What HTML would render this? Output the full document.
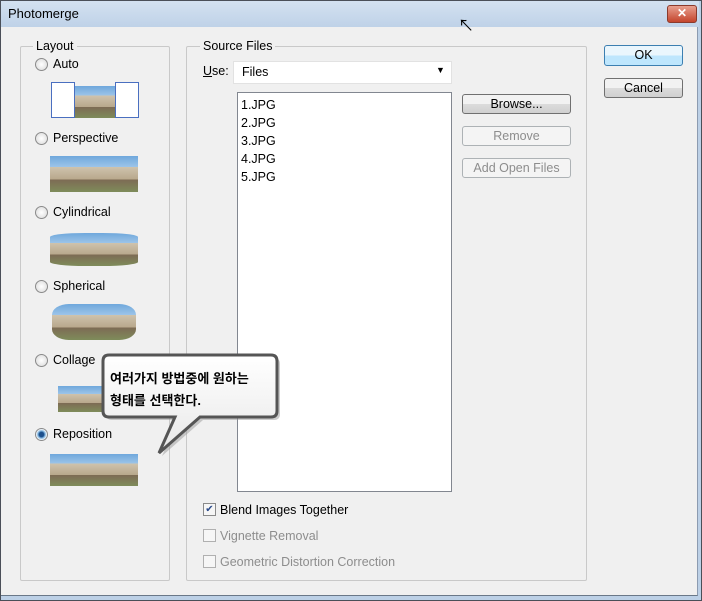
<!DOCTYPE html><html><head><meta charset="utf-8"><style>
body{margin:0;width:702px;height:601px;background:#fff;font-family:"Liberation Sans","Noto Sans CJK KR",sans-serif;font-size:12.5px;color:#000;position:relative;overflow:hidden}
.a{position:absolute}
.win{left:0;top:0;width:700px;height:599px;border:1px solid #4a4f58;background:#bcd0e6}
.title{left:1px;top:1px;width:698px;height:26px;background:linear-gradient(#d3e1f0,#bfd2e8)}
.body{left:1px;top:27px;width:696px;height:568px;background:#f0f0f0;border-right:1px solid #8c9bb0;border-bottom:1px solid #6a7888}
.grp{border:1px solid #c9c9c9;border-radius:2px}
.lg{background:#f0f0f0;padding:0 3px}
.rad{width:11px;height:11px;border:1px solid #8a8a8a;border-radius:50%;background:radial-gradient(#fff,#d8d8d8)}
.btn{border:1px solid #707070;border-radius:3px;background:linear-gradient(#f2f2f2 50%,#dcdcdc 50%,#d0d0d0);text-align:center;line-height:18px}
.dis{border-color:#adb2b5;color:#8d8d8d;background:#f4f4f4}
.chk{width:11px;height:11px;border:1px solid #b0b0b0;background:#f6f6f6}
.img{background:linear-gradient(#6fa8dc 0,#9cc4e8 30%,#cfc3ad 30%,#b8a88c 65%,#7d6a54 65%,#7e8c5a 100%)}
</style></head><body>
<div class="a win"></div><div class="a title"></div>
<div class="a" style="left:8px;top:6px;font-size:13px">Photomerge</div>
<div class="a" style="left:667px;top:5px;width:28px;height:16px;border:1px solid #8b3a2c;border-radius:3px;background:linear-gradient(#e8a08f,#c4452d);color:#fff;font-weight:bold;text-align:center;line-height:15px;font-size:12px">✕</div>
<div class="a body"></div>
<div class="a grp" style="left:20px;top:46px;width:148px;height:533px"></div>
<div class="a lg" style="left:33px;top:39px">Layout</div>
<div class="a grp" style="left:186px;top:46px;width:399px;height:533px"></div>
<div class="a lg" style="left:200px;top:39px">Source Files</div>

<div class="a rad" style="left:35px;top:58px"></div><div class="a" style="left:53px;top:57px">Auto</div>
<div class="a img" style="left:72px;top:86px;width:44px;height:32px"></div>
<div class="a" style="left:51px;top:82px;width:22px;height:34px;border:1px solid #4a6fc0;background:#fff"></div>
<div class="a" style="left:115px;top:82px;width:22px;height:34px;border:1px solid #4a6fc0;background:#fff"></div>
<div class="a rad" style="left:35px;top:132px"></div><div class="a" style="left:53px;top:131px">Perspective</div>
<div class="a img" style="left:50px;top:156px;width:88px;height:36px"></div>
<div class="a rad" style="left:35px;top:206px"></div><div class="a" style="left:53px;top:205px">Cylindrical</div>
<div class="a img" style="left:50px;top:233px;width:88px;height:33px;border-radius:40%/12%"></div>
<div class="a rad" style="left:35px;top:280px"></div><div class="a" style="left:53px;top:279px">Spherical</div>
<div class="a img" style="left:52px;top:304px;width:84px;height:36px;border-radius:20%/30%"></div>
<div class="a rad" style="left:35px;top:354px"></div><div class="a" style="left:53px;top:353px">Collage</div>
<div class="a img" style="left:58px;top:386px;width:48px;height:26px"></div>
<div class="a rad" style="left:35px;top:428px;background:radial-gradient(#1c4f8c 30%,#7ab0dc 45%,#fff 70%)"></div><div class="a" style="left:53px;top:427px">Reposition</div>
<div class="a img" style="left:50px;top:454px;width:88px;height:32px"></div>

<div class="a" style="left:203px;top:64px"><u>U</u>se:</div>
<div class="a" style="left:233px;top:61px;width:217px;height:21px;background:#fff;border:1px solid #e2e2e2"></div>
<div class="a" style="left:242px;top:65px">Files</div>
<div class="a" style="left:436px;top:65px;font-size:9px">▼</div>
<div class="a" style="left:237px;top:92px;width:213px;height:398px;background:#fff;border:1px solid #828790"></div>
<div class="a" style="left:241px;top:96px;line-height:18px">1.JPG<br>2.JPG<br>3.JPG<br>4.JPG<br>5.JPG</div>
<div class="a btn" style="left:462px;top:94px;width:107px;height:18px">Browse...</div>
<div class="a btn dis" style="left:462px;top:126px;width:107px;height:18px">Remove</div>
<div class="a btn dis" style="left:462px;top:158px;width:107px;height:18px">Add Open Files</div>
<div class="a btn" style="left:604px;top:45px;width:77px;height:19px;border-color:#3c7fb1;background:linear-gradient(#eaf6fd 50%,#bee6fd 50%)">OK</div>
<div class="a btn" style="left:604px;top:78px;width:77px;height:18px">Cancel</div>

<div class="a chk" style="left:203px;top:503px;border-color:#8a8a8a;font-size:10px;line-height:11px;text-align:center;color:#2a4a8a">✔</div><div class="a" style="left:220px;top:503px">Blend Images Together</div>
<div class="a chk" style="left:203px;top:529px"></div><div class="a" style="left:220px;top:529px;color:#8d8d8d">Vignette Removal</div>
<div class="a chk" style="left:203px;top:555px"></div><div class="a" style="left:220px;top:555px;color:#8d8d8d">Geometric Distortion Correction</div>

<svg class="a" style="left:95px;top:350px" width="200" height="110"><defs><linearGradient id="g" x1="0" y1="0" x2="0" y2="1"><stop offset="0" stop-color="#fff"/><stop offset="1" stop-color="#e8e8e8"/></linearGradient></defs>
<path d="M14,5 H176 Q182,5 182,11 V61 Q182,67 176,67 H105 L64,103 L80,67 H14 Q8,67 8,61 V11 Q8,5 14,5 Z" fill="#999" opacity=".5" transform="translate(3,3)"/>
<path d="M14,5 H176 Q182,5 182,11 V61 Q182,67 176,67 H105 L64,103 L80,67 H14 Q8,67 8,61 V11 Q8,5 14,5 Z" fill="url(#g)" stroke="#555" stroke-width="3"/></svg>
<div class="a" style="left:110px;top:368px;font-weight:bold;font-size:13px;line-height:22px">여러가지 방법중에 원하는<br>형태를 선택한다.</div>
<div class="a" style="left:458px;top:12px;font-size:16px">↖</div>
</body></html>
